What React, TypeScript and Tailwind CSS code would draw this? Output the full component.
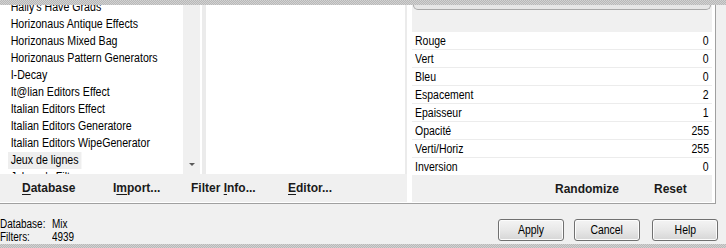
import React from "react";

const items = [
  "Hally's Have Grads",
  "Horizonaus Antique Effects",
  "Horizonaus Mixed Bag",
  "Horizonaus Pattern Generators",
  "I-Decay",
  "It@lian Editors Effect",
  "Italian Editors Effect",
  "Italian Editors Generatore",
  "Italian Editors WipeGenerator",
  "Jeux de lignes",
  "Johann's Filters",
];

const params: [string, string][] = [
  ["Rouge", "0"],
  ["Vert", "0"],
  ["Bleu", "0"],
  ["Espacement", "2"],
  ["Epaisseur", "1"],
  ["Opacité", "255"],
  ["Verti/Horiz", "255"],
  ["Inversion", "0"],
];

const sans = "[font-family:'Liberation_Sans',Arial,sans-serif]";
const bold = "[font-family:'Liberation_Sans',Arial,sans-serif] font-bold text-[12px] text-[#1a1a1a]";
const stripe =
  "bg-[repeating-conic-gradient(#b8b8b8_0%_25%,#d2d2d2_0%_50%)] bg-[length:2px_2px]";

function WinButton({ label, className }: { label: string; className?: string }) {
  return (
    <div
      className={
        "w-[66px] h-[22px] rounded-[3px] border border-[#707070] bg-gradient-to-b from-[#f4f4f4] via-[#e8e8e8] to-[#d6d6d6] flex items-center justify-center text-[12px] text-black shadow-[inset_0_0_0_1px_#fcfcfc] " +
        sans +
        " " +
        (className ?? "")
      }
    >
      <span className="inline-block scale-x-[0.87] origin-center whitespace-nowrap">{label}</span>
    </div>
  );
}

export default function App() {
  return (
    <div className="w-[726px] h-[248px] bg-[#f0f0f0] flex flex-col overflow-hidden text-black">
      <div className={"h-[5px] shrink-0 " + stripe} />
      <div className="flex h-[199px] shrink-0">
        <div className="w-[716px] h-full bg-white border-r border-b border-[#a0a0a0] flex">
          {/* left group */}
          <div className="w-[407px] flex flex-col">
            <div className="h-[169px] flex">
              <div className="w-[183px] h-full bg-white overflow-hidden">
                <div className={"-mt-[6px] pl-[8px] text-[12px] " + sans}>
                  {items.map((it) => (
                    <div key={it} className="h-[17px] leading-[17px] flex">
                      <span
                        className={
                          "inline-block px-[3px] whitespace-nowrap scale-x-[0.885] origin-left " +
                          (it === "Jeux de lignes" ? "bg-[#eeeeee]" : "")
                        }
                      >
                        {it}
                      </span>
                    </div>
                  ))}
                </div>
              </div>
              <div className="w-[17px] h-full bg-[#f0f0f0] flex flex-col items-center justify-end pb-[8px]">
                <div className="w-0 h-0 border-l-[3px] border-r-[3px] border-t-[3px] border-l-transparent border-r-transparent border-t-[#5a5a5a]" />
              </div>
              <div className="w-[2px] h-full bg-white" />
              <div className="w-[203px] h-full bg-white border-l-[4px] border-[#ebebeb]" />
              <div className="w-[2px] h-full bg-[#ebebeb]" />
            </div>
            <div className={"h-[28px] bg-[#f0f0f0] flex items-center pl-[22px] " + bold}>
              <span className="w-[91px]">
                <span className="underline underline-offset-[2px]">D</span>atabase
              </span>
              <span className="w-[78px]">
                I<span className="underline underline-offset-[2px]">m</span>port...
              </span>
              <span className="w-[97px]">
                Filter <span className="underline underline-offset-[2px]">I</span>nfo...
              </span>
              <span>
                <span className="underline underline-offset-[2px]">E</span>ditor...
              </span>
            </div>
          </div>
          {/* gap */}
          <div className="w-[5px]" />
          {/* right group */}
          <div className="w-[300px] flex flex-col">
            <div className="h-[27px] bg-[#f0f0f0] px-[1px]">
              <div className="h-[5px] border-b border-l border-r border-[#a8a8a8] rounded-b-[5px] bg-[#e6e6e6]" />
            </div>
            <div className={"h-[143px] overflow-hidden text-[12px] " + sans}>
              {params.map(([k, v], i) => (
                <div
                  key={k}
                  className={
                    "flex justify-between items-center pl-[3px] pr-[3px] bg-white " +
                    (i < params.length - 1 ? "h-[18px] border-b border-[#ececec]" : "h-[17px]")
                  }
                >
                  <span className="inline-block scale-x-[0.875] origin-left whitespace-nowrap">{k}</span>
                  <span className="inline-block scale-x-[0.875] origin-right whitespace-nowrap">{v}</span>
                </div>
              ))}
            </div>
            <div className={"h-[27px] bg-[#f0f0f0] flex items-center pl-[143px] " + bold}>
              <span className="w-[99px]">Randomize</span>
              <span>Reset</span>
            </div>
          </div>
        </div>
        <div className="flex-1 bg-[#f0f0f0]" />
      </div>
      {/* bottom area */}
      <div className="h-[40px] shrink-0 flex">
        <div className={"mt-[14px] text-[12px] leading-[13px] " + sans}>
          <div className="flex">
            <span className="w-[52px]">
              <span className="inline-block scale-x-[0.83] origin-left whitespace-nowrap">Database:</span>
            </span>
            <span className="inline-block scale-x-[0.83] origin-left">Mix</span>
          </div>
          <div className="flex">
            <span className="w-[52px]">
              <span className="inline-block scale-x-[0.83] origin-left whitespace-nowrap">Filters:</span>
            </span>
            <span className="inline-block scale-x-[0.83] origin-left">4939</span>
          </div>
        </div>
        <div className="ml-auto mt-[15px] flex pr-[8px]">
          <WinButton label="Apply" className="mr-[10px]" />
          <WinButton label="Cancel" className="mr-[12px]" />
          <WinButton label="Help" />
        </div>
      </div>
      <div className={"h-[4px] shrink-0 " + stripe} />
    </div>
  );
}
